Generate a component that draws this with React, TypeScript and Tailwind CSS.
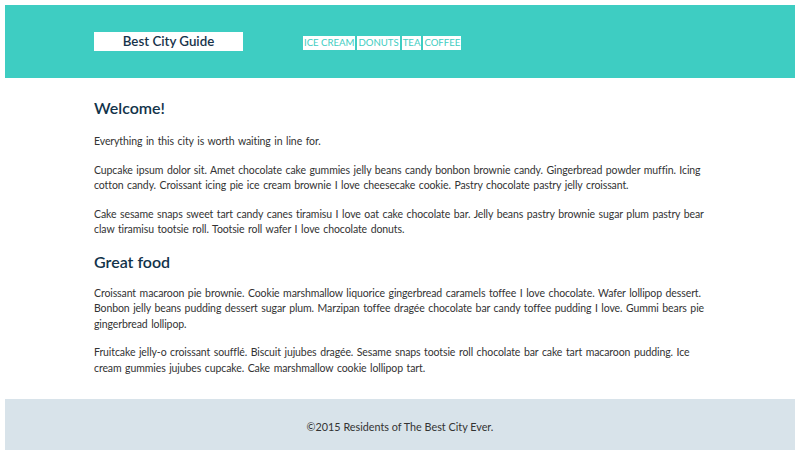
export default function App() {
  const font = { fontFamily: 'Lato, "Noto Sans", sans-serif' };
  return (
    <div className="bg-white p-[5px] pb-0" style={font}>
      <header className="h-[73px] bg-[#3ecdc2] flex items-center">
        <div className="w-[612px] mx-auto flex items-center">
          <div className="w-[149px] h-[19px] bg-white flex items-center justify-center text-[13.3px] text-[#16324a] font-semibold">
            Best City Guide
          </div>
          <nav className="ml-[60px] flex gap-[2px] mt-[2px]">
            {["ICE CREAM", "DONUTS", "TEA", "COFFEE"].map((n) => (
              <span key={n} className="bg-white text-[#3ecdc2] text-[9.6px] leading-[14px] px-[1px]">
                {n}
              </span>
            ))}
          </nav>
        </div>
      </header>
      <main className="w-[612px] mx-auto pt-[19px] pb-[23px] text-[10.5px] tracking-[-0.1px] [word-spacing:1px] leading-[15.5px] text-[#333]">
        <h1 className="text-[16px] tracking-normal [word-spacing:0px] leading-[22px] font-semibold text-[#12334a] mb-[15px]">Welcome!</h1>
        <p className="mb-[13px]">Everything in this city is worth waiting in line for.</p>
        <p className="mb-[13px]">
          Cupcake ipsum dolor sit. Amet chocolate cake gummies jelly beans candy bonbon brownie candy. Gingerbread powder muffin. Icing cotton candy. Croissant icing pie ice cream brownie I love cheesecake cookie. Pastry chocolate pastry jelly croissant.
        </p>
        <p className="mb-[13px]">
          Cake sesame snaps sweet tart candy canes tiramisu I love oat cake chocolate bar. Jelly beans pastry brownie sugar plum pastry bear claw tiramisu tootsie roll. Tootsie roll wafer I love chocolate donuts.
        </p>
        <h2 className="text-[16px] tracking-normal [word-spacing:0px] leading-[22px] font-semibold text-[#12334a] mt-[2px] mb-[13px]">Great food</h2>
        <p className="mb-[13px]">
          Croissant macaroon pie brownie. Cookie marshmallow liquorice gingerbread caramels toffee I love chocolate. Wafer lollipop dessert. Bonbon jelly beans pudding dessert sugar plum. Marzipan toffee dragée chocolate bar candy toffee pudding I love. Gummi bears pie gingerbread lollipop.
        </p>
        <p>
          Fruitcake jelly-o croissant soufflé. Biscuit jujubes dragée. Sesame snaps tootsie roll chocolate bar cake tart macaroon pudding. Ice cream gummies jujubes cupcake. Cake marshmallow cookie lollipop tart.
        </p>
      </main>
      <footer className="h-[60px] bg-[#d8e3ea] flex justify-center pt-[20px] text-[10.8px] text-[#333]">
        ©2015 Residents of The Best City Ever.
      </footer>
    </div>
  );
}
